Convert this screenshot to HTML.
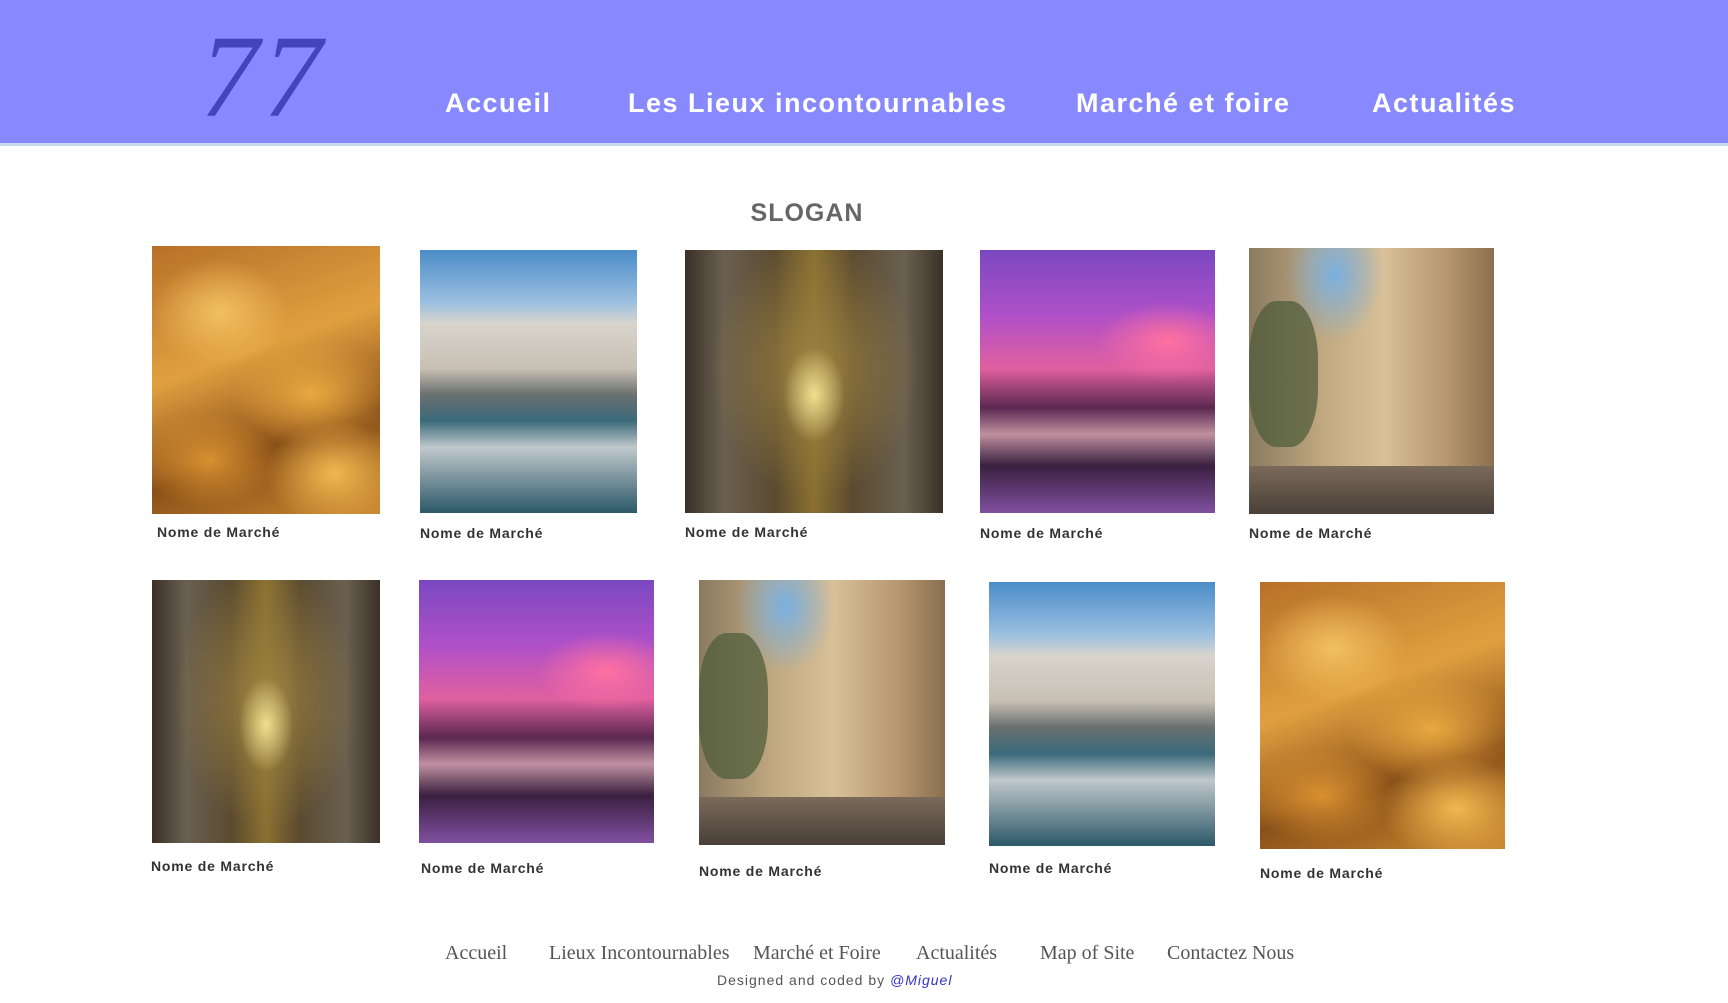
<!DOCTYPE html>
<html><head><meta charset="utf-8"><style>
*{margin:0;padding:0;box-sizing:border-box}
body{width:1728px;height:1003px;background:#fff;position:relative;overflow:hidden;font-family:"Liberation Sans",sans-serif}
.hdr{position:absolute;left:0;top:0;width:1728px;height:146px;background:#8888ff;border-bottom:3px solid #c8d8ea}
.logo{position:absolute;left:200px;top:18px;font-family:"Liberation Serif",serif;font-style:italic;font-size:118px;color:#4444bb;letter-spacing:4px;line-height:1}
.nav{position:absolute;top:88px;color:#fff;font-weight:bold;font-size:27px;letter-spacing:1.5px}
.slogan{position:absolute;left:0;width:1614px;text-align:center;top:199px;font-weight:bold;font-size:25px;color:#666;letter-spacing:1px}
.im{position:absolute}
.cap{position:absolute;font-weight:bold;font-size:14px;color:#333;letter-spacing:.8px}
.cr{background:radial-gradient(ellipse 30% 20% at 30% 25%,#f2c060,transparent),radial-gradient(ellipse 35% 20% at 70% 55%,#e8a840,transparent),radial-gradient(ellipse 30% 18% at 25% 80%,#d89030,transparent),radial-gradient(ellipse 30% 20% at 80% 85%,#f0b850,transparent),linear-gradient(160deg,#b87028,#e0a040 40%,#8a5018 70%,#c88830)}
.hb{background:linear-gradient(180deg,#4a8cc8 0%,#9cc0e0 20%,#d8d4cc 28%,#c8c0b4 45%,#6a7070 55%,#3a6a7a 65%,#c0c8cc 75%,#2c5868 100%)}
.ca{background:radial-gradient(ellipse 12% 18% at 50% 55%,#f0e090,transparent),radial-gradient(ellipse 40% 50% at 50% 45%,#9a8040,transparent),linear-gradient(90deg,#3a3028,#6a6050 15%,#5a4a30 35%,#8a7030 50%,#5a4a30 65%,#6a6050 85%,#3a3028),#3a2a20}
.br{background:radial-gradient(ellipse 30% 15% at 80% 35%,#ff70a0,transparent),linear-gradient(180deg,#7a48c0 0%,#b050c8 25%,#e060a0 45%,#5a2850 60%,#c090a0 70%,#3a2040 82%,#8050a0 100%)}
.st{background:radial-gradient(ellipse 20% 25% at 35% 10%,#7ab0e0,transparent),linear-gradient(90deg,#8a7a60,#c0a880 30%,#d8c098 55%,#b89870 80%,#8a7050),#a08060}
.st::after{content:"";position:absolute;left:0;right:0;bottom:0;height:18%;background:linear-gradient(#7a6a5a,#4a4038)}
.st::before{content:"";position:absolute;left:0;top:20%;width:28%;height:55%;background:#4a5a38;opacity:.7;border-radius:40%}
.ft{position:absolute;top:942px;font-family:"Liberation Serif",serif;font-size:20px;color:#555}
.des{position:absolute;top:972px;left:717px;font-size:14px;color:#555;letter-spacing:1px}
.des i{color:#3333cc}
</style></head><body>
<div class="hdr">
<div class="logo">77</div>
<div class="nav" style="left:445px">Accueil</div>
<div class="nav" style="left:628px">Les Lieux incontournables</div>
<div class="nav" style="left:1076px">Marché et foire</div>
<div class="nav" style="left:1372px">Actualités</div>
</div>
<div class="slogan">SLOGAN</div>

<div class="im cr" style="left:152px;top:246px;width:228px;height:268px"></div>
<div class="im hb" style="left:420px;top:250px;width:217px;height:263px"></div>
<div class="im ca" style="left:685px;top:250px;width:258px;height:263px"></div>
<div class="im br" style="left:980px;top:250px;width:235px;height:263px"></div>
<div class="im st" style="left:1249px;top:248px;width:245px;height:266px"></div>
<div class="cap" style="left:157px;top:524px">Nome de Marché</div>
<div class="cap" style="left:420px;top:525px">Nome de Marché</div>
<div class="cap" style="left:685px;top:524px">Nome de Marché</div>
<div class="cap" style="left:980px;top:525px">Nome de Marché</div>
<div class="cap" style="left:1249px;top:525px">Nome de Marché</div>

<div class="im ca" style="left:152px;top:580px;width:228px;height:263px"></div>
<div class="im br" style="left:419px;top:580px;width:235px;height:263px"></div>
<div class="im st" style="left:699px;top:580px;width:246px;height:265px"></div>
<div class="im hb" style="left:989px;top:582px;width:226px;height:264px"></div>
<div class="im cr" style="left:1260px;top:582px;width:245px;height:267px"></div>
<div class="cap" style="left:151px;top:858px">Nome de Marché</div>
<div class="cap" style="left:421px;top:860px">Nome de Marché</div>
<div class="cap" style="left:699px;top:863px">Nome de Marché</div>
<div class="cap" style="left:989px;top:860px">Nome de Marché</div>
<div class="cap" style="left:1260px;top:865px">Nome de Marché</div>

<div class="ft" style="left:445px">Accueil</div>
<div class="ft" style="left:549px">Lieux Incontournables</div>
<div class="ft" style="left:753px">Marché et Foire</div>
<div class="ft" style="left:916px">Actualités</div>
<div class="ft" style="left:1040px">Map of Site</div>
<div class="ft" style="left:1167px">Contactez Nous</div>
<div class="des">Designed and coded by <i>@Miguel</i></div>
</body></html>
